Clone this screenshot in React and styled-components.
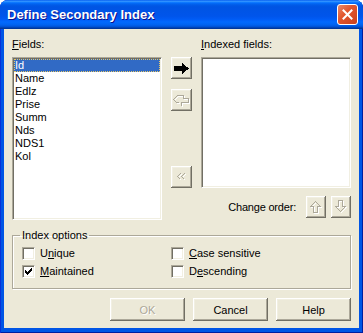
import React from "react";
import styled, { createGlobalStyle } from "styled-components";

const GlobalStyle = createGlobalStyle`
  html, body {
    margin: 0;
    padding: 0;
    background: #ffffff;
  }
  body {
    font-family: "Liberation Sans", Arial, sans-serif;
    font-size: 11px;
    color: #000000;
  }
`;

const Window = styled.div`
  width: 363px;
  height: 333px;
  box-sizing: border-box;
  display: flex;
  flex-direction: column;
  padding: 0 4px 5px;
  background: #0055e5;
  border-radius: 8px 8px 0 0;
  box-shadow: inset 1px 0 #0831d9, inset -1px 0 #001ea0, inset 0 -1px #001ea0;
  overflow: hidden;
`;

const TitleBar = styled.div`
  height: 29px;
  margin: 0 -4px;
  padding: 0 5px 0 7px;
  display: flex;
  align-items: center;
  justify-content: space-between;
  background: linear-gradient(
    to bottom,
    #0058ee 0%,
    #3593ff 4%,
    #288eff 6%,
    #127dff 8%,
    #036ffc 10%,
    #0262ee 14%,
    #0057e5 20%,
    #0054e3 24%,
    #0055eb 56%,
    #005bf5 66%,
    #026afe 76%,
    #0062ef 86%,
    #0052d6 92%,
    #0040ab 96%,
    #003092 100%
  );
`;

const Title = styled.span`
  font-family: "Liberation Sans", Arial, sans-serif;
  font-weight: bold;
  font-size: 13px;
  color: #ffffff;
  text-shadow: 1px 1px #0f1089;
`;

const CloseButton = styled.div`
  width: 21px;
  height: 21px;
  box-sizing: border-box;
  border: 1px solid #ffffff;
  border-radius: 3px;
  display: flex;
  align-items: center;
  justify-content: center;
  background: linear-gradient(135deg, #ea8a6a 0%, #e2572f 40%, #c9401d 100%);
`;

const Body = styled.div`
  flex: 1;
  background: #ece9d8;
  padding: 9px 8px 7px 8px;
  display: flex;
  flex-direction: column;
`;

const FieldsGrid = styled.div`
  display: grid;
  grid-template-columns: 150px 21px 150px;
  grid-template-rows: 13px auto;
  column-gap: 9px;
  row-gap: 6px;
`;

const Label = styled.div`
  line-height: 13px;
  grid-column: ${p => p.$col};
`;

const ListBox = styled.div`
  height: ${p => p.$height}px;
  box-sizing: border-box;
  background: #ffffff;
  border: 1px solid;
  border-color: #aca899 #ffffff #ffffff #aca899;
  box-shadow: inset 1px 1px #716f64, inset -1px -1px #f1efe2;
  padding: 1px;
  display: flex;
  flex-direction: column;
`;

const ListItem = styled.div`
  height: 13px;
  line-height: 13px;
  padding-left: 1px;
  white-space: nowrap;
  background: ${p => (p.$selected ? "#316ac5" : "transparent")};
  color: ${p => (p.$selected ? "#ffffff" : "#000000")};
  outline: ${p => (p.$selected ? "1px dotted #e6c76a" : "none")};
  outline-offset: -1px;
`;

const ButtonColumn = styled.div`
  height: 131px;
  display: flex;
  flex-direction: column;
  gap: 10px;
`;

const Spacer = styled.div`
  flex: 1;
`;

const IconButton = styled.div`
  width: ${p => p.$width || 21}px;
  height: 22px;
  box-sizing: border-box;
  background: #ece9d8;
  box-shadow: inset -1px -1px #716f64, inset 1px 1px #ffffff,
    inset -2px -2px #aca899, inset 2px 2px #f1efe2;
  display: flex;
  align-items: center;
  justify-content: center;
`;

const RightColumn = styled.div`
  display: flex;
  flex-direction: column;
`;

const OrderRow = styled.div`
  margin-top: 8px;
  display: flex;
  align-items: center;
  justify-content: flex-end;
  gap: 5px;
`;

const OrderLabel = styled.span`
  margin-right: 5px;
  line-height: 13px;
  letter-spacing: -0.2px;
`;

const GroupBox = styled.fieldset`
  margin: 9px 0 0 0;
  padding: 5px 9px 10px 9px;
  border: 1px solid #aca899;
  box-shadow: 1px 1px 0 #ffffff, inset 1px 1px 0 #ffffff;
  min-width: 0;
`;

const Legend = styled.legend`
  padding: 0 2px;
  margin-left: -2px;
  line-height: 13px;
`;

const OptionsGrid = styled.div`
  display: grid;
  grid-template-columns: 149px 1fr;
  row-gap: 5px;
`;

const CheckRow = styled.div`
  display: flex;
  align-items: center;
  gap: 5px;
  height: 13px;
  line-height: 13px;
`;

const CheckBox = styled.div`
  width: 13px;
  height: 13px;
  box-sizing: border-box;
  background: #ffffff;
  border: 1px solid;
  border-color: #aca899 #ffffff #ffffff #aca899;
  box-shadow: inset 1px 1px #716f64, inset -1px -1px #f1efe2;
  display: flex;
  align-items: center;
  justify-content: center;
`;

const ButtonRow = styled.div`
  margin-top: 9px;
  display: flex;
  justify-content: flex-end;
  gap: 8px;
`;

const PushButton = styled.div`
  width: 75px;
  height: 23px;
  box-sizing: border-box;
  background: #ece9d8;
  box-shadow: inset -1px -1px #716f64, inset 1px 1px #ffffff,
    inset -2px -2px #aca899, inset 2px 2px #f1efe2;
  display: flex;
  align-items: center;
  justify-content: center;
  color: ${p => (p.$disabled ? "#aca899" : "#000000")};
  text-shadow: ${p => (p.$disabled ? "1px 1px #ffffff" : "none")};
`;

const fields = ["Id", "Name", "Edlz", "Prise", "Summ", "Nds", "NDS1", "Kol"];

const CloseIcon = () => (
  <svg width="11" height="11" viewBox="0 0 11 11">
    <path d="M1.5 1.5 L9.5 9.5 M9.5 1.5 L1.5 9.5" stroke="#ffffff" strokeWidth="2" strokeLinecap="square" />
  </svg>
);

const RightArrow = () => (
  <svg width="15" height="11" viewBox="0 0 15 11" shapeRendering="crispEdges">
    <polygon points="0,3 8,3 8,0 15,5.5 8,11 8,8 0,8" fill="#000000" />
  </svg>
);

const Disabled = ({ d, w = 21, h = 22 }) => (
  <svg width={w} height={h} viewBox={`0 0 ${w} ${h}`} shapeRendering="crispEdges">
    <path d={d} fill="none" stroke="#ffffff" strokeWidth="1" transform="translate(1 1)" />
    <path d={d} fill="none" stroke="#aca899" strokeWidth="1" />
  </svg>
);

// classic 7x7 check mark, one rect per run of pixels
const checkRuns = [
  [6, 0, 1], [5, 1, 2], [0, 2, 1], [4, 2, 3], [0, 3, 2], [3, 3, 3],
  [0, 4, 5], [1, 5, 3], [2, 6, 1],
];

const Check = () => (
  <svg width="7" height="7" viewBox="0 0 7 7" shapeRendering="crispEdges">
    {checkRuns.map(([x, y, w]) => (
      <rect key={`${x}-${y}`} x={x} y={y} width={w} height="1" fill="#000000" />
    ))}
  </svg>
);

export default function App() {
  return (
    <>
      <GlobalStyle />
      <Window>
        <TitleBar>
          <Title>Define Secondary Index</Title>
          <CloseButton>
            <CloseIcon />
          </CloseButton>
        </TitleBar>
        <Body>
          <FieldsGrid>
            <Label $col="1">
              <u>F</u>ields:
            </Label>
            <Label $col="3">
              <u>I</u>ndexed fields:
            </Label>
            <ListBox $height={163}>
              {fields.map((f, i) => (
                <ListItem key={f} $selected={i === 0}>
                  {f}
                </ListItem>
              ))}
            </ListBox>
            <ButtonColumn>
              <IconButton>
                <RightArrow />
              </IconButton>
              <IconButton>
                <Disabled d="M2.5 10.5 L6.5 6.5 L12.5 6.5 L12.5 9.5 L17.5 9.5 L17.5 13.5 L10.5 13.5 L10.5 16.5 M2.5 10.5 L5.5 13.5 L7.5 13.5" />
              </IconButton>
              <Spacer />
              <IconButton>
                <Disabled d="M9.5 7.5 L6.5 10.5 L9.5 13.5 M13.5 7.5 L10.5 10.5 L13.5 13.5" />
              </IconButton>
            </ButtonColumn>
            <RightColumn>
              <ListBox $height={131} />
              <OrderRow>
                <OrderLabel>Change order:</OrderLabel>
                <IconButton $width={20}>
                  <Disabled w={20} d="M9.5 5.5 L4.5 10.5 L7.5 10.5 L7.5 16.5 L11.5 16.5 L11.5 10.5 L14.5 10.5 Z" />
                </IconButton>
                <IconButton $width={20}>
                  <Disabled w={20} d="M7.5 4.5 L7.5 10.5 L4.5 10.5 L9.5 15.5 L14.5 10.5 L11.5 10.5 L11.5 4.5 Z" />
                </IconButton>
              </OrderRow>
            </RightColumn>
          </FieldsGrid>
          <GroupBox>
            <Legend>Index options</Legend>
            <OptionsGrid>
              <CheckRow>
                <CheckBox />
                <span>
                  U<u>n</u>ique
                </span>
              </CheckRow>
              <CheckRow>
                <CheckBox />
                <span>
                  <u>C</u>ase sensitive
                </span>
              </CheckRow>
              <CheckRow>
                <CheckBox>
                  <Check />
                </CheckBox>
                <span>
                  <u>M</u>aintained
                </span>
              </CheckRow>
              <CheckRow>
                <CheckBox />
                <span>
                  D<u>e</u>scending
                </span>
              </CheckRow>
            </OptionsGrid>
          </GroupBox>
          <ButtonRow>
            <PushButton $disabled>OK</PushButton>
            <PushButton>Cancel</PushButton>
            <PushButton>Help</PushButton>
          </ButtonRow>
        </Body>
      </Window>
    </>
  );
}
